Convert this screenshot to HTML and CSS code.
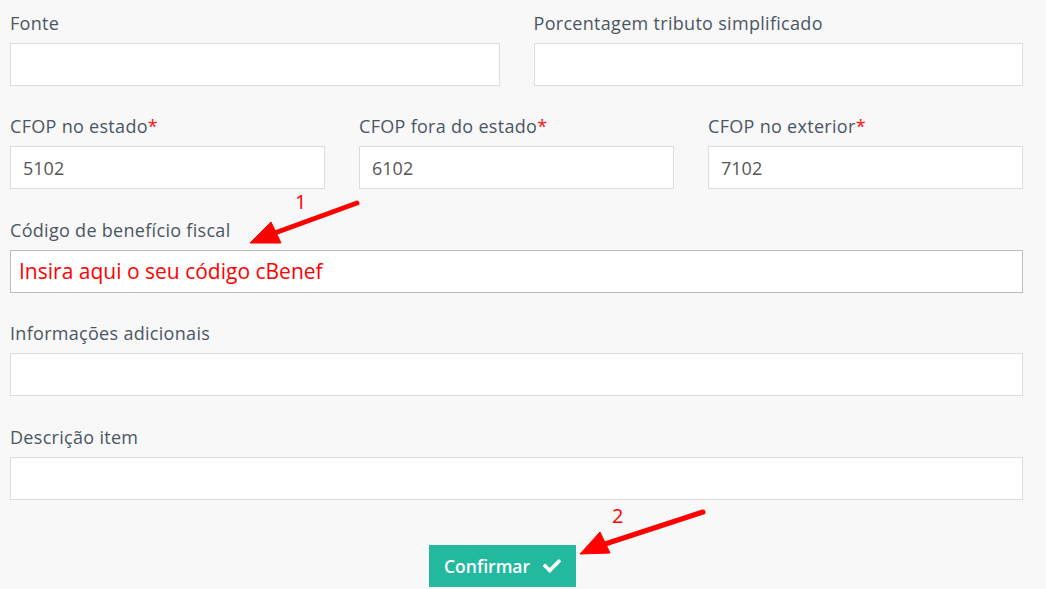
FILE: index.html
```html
<!DOCTYPE html>
<html lang="pt-BR">
<head>
    <meta charset="UTF-8">
    <meta name="viewport" content="width=device-width, initial-scale=1.0">
    <title>Produto - dados fiscais</title>
    <link rel="stylesheet" href="styles.css">
</head>
<body>
    <div class="page">
        <form class="fiscal-form">
            <div class="row cols-2">
                <div class="field">
                    <label>Fonte</label>
                    <input type="text" class="input">
                </div>
                <div class="field">
                    <label>Porcentagem tributo simplificado</label>
                    <input type="text" class="input">
                </div>
            </div>
            <div class="row cols-3">
                <div class="field">
                    <label>CFOP no estado<span class="req">*</span></label>
                    <input type="text" class="input" value="5102">
                </div>
                <div class="field">
                    <label>CFOP fora do estado<span class="req">*</span></label>
                    <input type="text" class="input" value="6102">
                </div>
                <div class="field">
                    <label>CFOP no exterior<span class="req">*</span></label>
                    <input type="text" class="input" value="7102">
                </div>
            </div>
            <div class="row">
                <div class="field">
                    <label>Código de benefício fiscal</label>
                    <div class="input input-note">Insira aqui o seu código cBenef</div>
                </div>
            </div>
            <div class="row">
                <div class="field">
                    <label>Informações adicionais</label>
                    <input type="text" class="input">
                </div>
            </div>
            <div class="row">
                <div class="field">
                    <label>Descrição item</label>
                    <input type="text" class="input">
                </div>
            </div>
            <div class="actions">
                <button type="button" class="btn-confirm">
                    Confirmar
                    <svg class="check" viewBox="0 0 512 512"><path d="M173.9 439.4l-166.4-166.4c-10-10-10-26.2 0-36.2l36.2-36.2c10-10 26.2-10 36.2 0L192 312.7 432.1 72.6c10-10 26.2-10 36.2 0l36.2 36.2c10 10 10 26.2 0 36.2l-294.4 294.4c-10 10-26.2 10-36.2 0z"/></svg>
                </button>
            </div>
        </form>

        <!-- setas de orientação -->
        <svg class="marks" width="1046" height="589" viewBox="0 0 1046 589">
            <g fill="#ff0000" stroke="#ff0000">
                <line x1="357" y1="203" x2="272" y2="234" stroke-width="5" stroke-linecap="round"/>
                <polygon points="250,243 271,222 281,243" stroke-width="1"/>
                <line x1="703" y1="512" x2="602" y2="545" stroke-width="5" stroke-linecap="round"/>
                <polygon points="580,554 600,532 610,553" stroke-width="1"/>
            </g>
            <text x="295" y="209" class="mark-num">1</text>
            <text x="612" y="523" class="mark-num">2</text>
        </svg>
    </div>
</body>
</html>
```

FILE: styles.css
```css
*{
    margin: 0;
    padding: 0;
    box-sizing: border-box;
}
body{
    background-color: #f8f8f8;
    font-family: "Open Sans", "Liberation Sans", sans-serif;
}
.page{
    position: relative;
    width: 1046px;
    height: 589px;
    overflow: hidden;
}
.fiscal-form{
    width: 1013px;
    margin-left: 10px;
    padding-top: 13px;
}
.row{
    display: grid;
    grid-template-columns: 1fr;
    column-gap: 34px;
    margin-bottom: 30px;
}
.row:nth-child(2),
.row:nth-child(4){
    margin-bottom: 31px;
}
.cols-2{
    grid-template-columns: 1fr 1fr;
}
.cols-3{
    grid-template-columns: 1fr 1fr 1fr;
}
.field label{
    display: block;
    height: 20px;
    line-height: 20px;
    margin-bottom: 10px;
    font-size: 18px;
    letter-spacing: 0.3px;
    color: #4a5663;
}
.req{
    color: #f01414;
}
.input{
    display: block;
    width: 100%;
    height: 43px;
    border: 1px solid #dcdcdc;
    background-color: #fff;
    padding: 0 12px;
    font-family: "Open Sans", "Liberation Sans", sans-serif;
    font-size: 18px;
    color: #555;
    outline: none;
}
.input-note{
    border-color: #b9bec3;
    padding-left: 8px;
    line-height: 41px;
    font-size: 21px;
    color: #ff0000;
}
.actions{
    padding-left: 419px;
    padding-top: 15px;
}
.btn-confirm{
    display: flex;
    align-items: center;
    gap: 13px;
    width: 147px;
    height: 42px;
    padding: 0 15px;
    border: none;
    background-color: #22b99e;
    color: #fff;
    font-family: "Open Sans", "Liberation Sans", sans-serif;
    font-weight: 600;
    font-size: 17.5px;
}
.check{
    width: 18px;
    height: 18px;
    fill: #fff;
}
.marks{
    position: absolute;
    left: 0;
    top: 0;
    pointer-events: none;
}
.mark-num{
    font-family: "Open Sans", "Liberation Sans", sans-serif;
    font-size: 20px;
    fill: #ff0000;
}
```
